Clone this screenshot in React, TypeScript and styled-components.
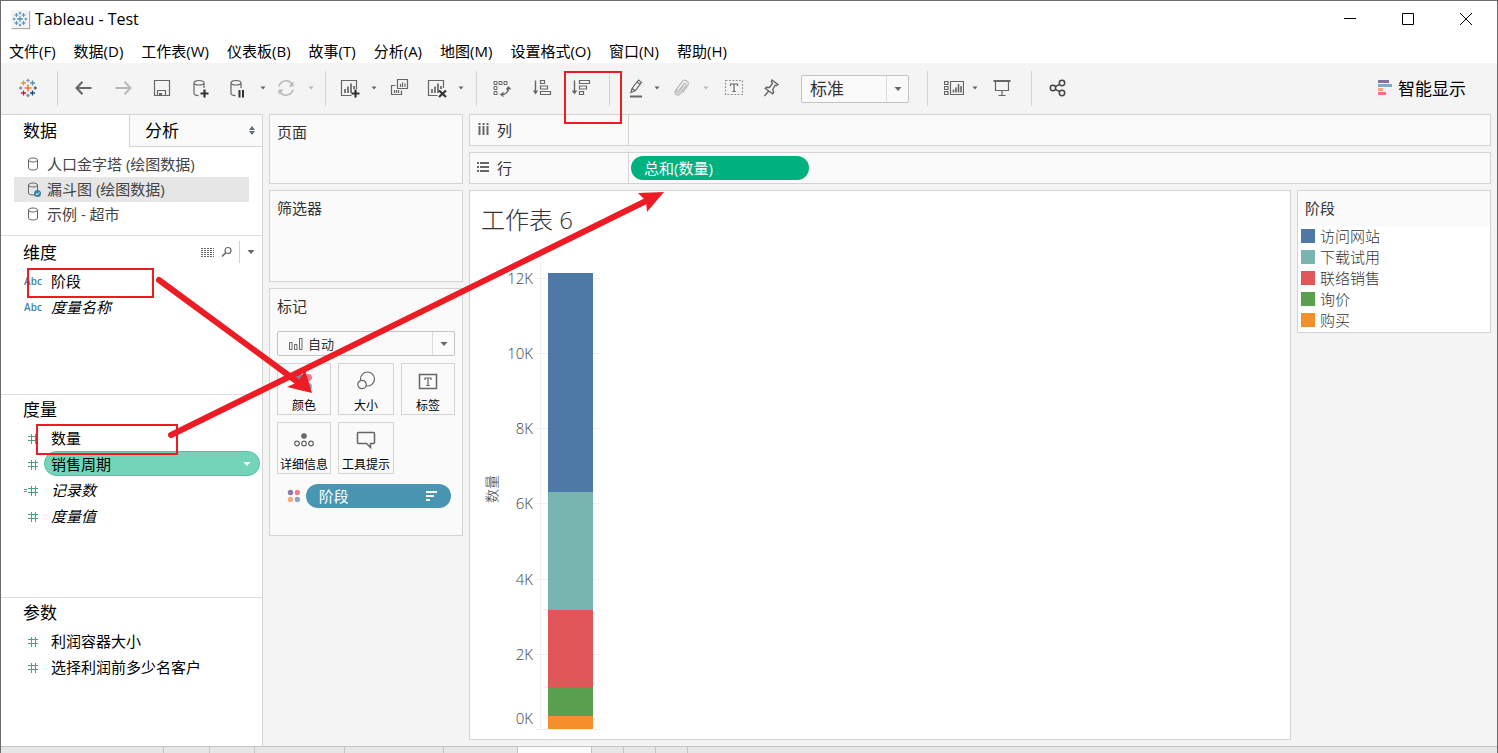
import React from "react";
import styled, { createGlobalStyle, css } from "styled-components";

const BORDER = "#d4d4d4";
const SURFACE = "#fafafa";
const CHROME = "#f4f4f4";
const RED = "#ed1c24";
const FONT = '"Open Sans", "Noto Sans CJK SC", sans-serif';

const GlobalStyle = createGlobalStyle`
  *, *::before, *::after { box-sizing: border-box; }
  body { margin: 0; background: ${CHROME}; font-family: ${FONT}; font-size: 15px; color: #000; }
  button, select { font: inherit; color: inherit; margin: 0; padding: 0; border: 0; background: none; }
  ul { list-style: none; margin: 0; padding: 0; }
  h1, h2 { margin: 0; font-weight: 400; }
  svg { display: block; }
`;

/* ---------- window frame ---------- */

const Window = styled.div`
  position: relative;
  display: flex;
  flex-direction: column;
  min-height: 100vh;
  overflow: hidden;
  border: 1px solid #6d6b6d;
  border-bottom: 0;
  background: ${CHROME};
`;

const TitleBar = styled.header`
  display: flex;
  align-items: center;
  height: 38px;
  padding: 0 2px 2px 10px;
  background: #fff;
`;

const AppBadge = styled.span`
  display: flex;
  align-items: center;
  justify-content: center;
  width: 18px;
  height: 18px;
  margin-right: 6px;
  background: #f3f3f3;
  box-shadow: 1px 1px 1px #aaa;
`;

const WindowTitle = styled.span`
  flex: 1;
  font-size: 16px;
  line-height: 36px;
`;

const WindowButton = styled.button`
  display: flex;
  align-items: center;
  justify-content: center;
  width: 58px;
  height: 36px;
`;

const MenuBar = styled.nav`
  display: flex;
  height: 24px;
  background: #fff;
`;

const MenuItem = styled.button`
  padding: 0 10px 0 8px;
  line-height: 24px;
  white-space: nowrap;
`;

/* ---------- toolbar ---------- */

const Toolbar = styled.div`
  display: flex;
  align-items: center;
  height: 51px;
  padding: 0 31px 0 8px;
`;

const ToolButton = styled.button<{ $w?: number; $dim?: boolean }>`
  display: flex;
  flex: none;
  align-items: center;
  justify-content: center;
  width: ${(p) => p.$w ?? 32}px;
  height: 35px;
  padding-bottom: 1px;
  color: ${(p) => (p.$dim ? "#b8b8b8" : "#666")};
`;

const Separator = styled.span<{ $before: number; $after: number }>`
  flex: none;
  width: 1px;
  height: 35px;
  margin: 0 ${(p) => p.$after}px 0 ${(p) => p.$before}px;
  background: ${BORDER};
`;

const SelectBox = styled.label<{ $large?: boolean }>`
  position: relative;
  display: flex;
  flex: none;
  align-items: center;
  width: ${(p) => (p.$large ? "108px" : "100%")};
  height: ${(p) => (p.$large ? 28 : 25)}px;
  margin-left: ${(p) => (p.$large ? 15 : 0)}px;
  border: 1px solid #c4c4c4;
  border-radius: 2px;
  background: ${SURFACE};
  color: #333;
`;

const Select = styled.select<{ $size: number; $indent: number }>`
  flex: 1;
  height: 100%;
  padding-left: ${(p) => p.$indent}px;
  appearance: none;
  font-size: ${(p) => p.$size}px;
  outline: none;
`;

const SelectIcon = styled.span`
  position: absolute;
  left: 11px;
  color: #666;
`;

const SelectArrow = styled.span`
  display: flex;
  align-items: center;
  justify-content: center;
  width: 22px;
  height: 100%;
  border-left: 1px solid #dcdcdc;
  color: #666;
  pointer-events: none;
`;

const ShowMe = styled.button`
  display: flex;
  align-items: center;
  gap: 6px;
  margin-left: auto;
  font-size: 17px;
  line-height: 26px;
  white-space: nowrap;
`;

/* ---------- data pane ---------- */

const Workspace = styled.main`
  display: flex;
  flex: 1;
  align-items: stretch;
`;

const DataPane = styled.aside`
  display: flex;
  flex: none;
  flex-direction: column;
  width: 262px;
  border-top: 1px solid ${BORDER};
  border-right: 1px solid ${BORDER};
  background: #fff;
`;

const PaneTabs = styled.div`
  display: flex;
  height: 32px;
`;

const PaneTab = styled.button<{ $active?: boolean }>`
  display: flex;
  align-items: center;
  justify-content: space-between;
  width: ${(p) => (p.$active ? 128 : 133)}px;
  padding: 0 7px 0 ${(p) => (p.$active ? 22 : 15)}px;
  font-size: 17px;
  line-height: 30px;
  ${(p) =>
    !p.$active &&
    css`
      border-left: 1px solid ${BORDER};
      border-bottom: 1px solid ${BORDER};
      background: ${SURFACE};
    `}
`;

const SourceList = styled.ul`
  padding: 5px 13px 8px;
  border-bottom: 1px solid #dedede;
`;

const SourceItem = styled.button<{ $selected?: boolean }>`
  display: flex;
  align-items: center;
  gap: 6px;
  width: 100%;
  height: 25px;
  padding: 0 0 2px 11px;
  color: #444;
  background: ${(p) => (p.$selected ? "#e6e6e6" : "transparent")};
  white-space: nowrap;
`;

const FieldSection = styled.section<{ $grow: number }>`
  flex: ${(p) => p.$grow} 0 0;
  & + & {
    border-top: 1px solid #dedede;
  }
`;

const SectionHead = styled.div`
  display: flex;
  align-items: flex-end;
  justify-content: space-between;
  min-height: 30px;
  padding-left: 22px;
`;

const SectionTitle = styled.h2`
  font-size: 17px;
  line-height: 30px;
`;

const SectionTools = styled.div`
  display: flex;
  align-items: center;
  height: 32px;
`;

const SectionToolButton = styled.button<{ $divided?: boolean }>`
  display: flex;
  align-items: center;
  justify-content: center;
  width: ${(p) => (p.$divided ? 23 : 19)}px;
  height: 22px;
  margin-left: ${(p) => (p.$divided ? 3 : 0)}px;
  color: #666;
  border-left: ${(p) => (p.$divided ? `1px solid ${BORDER}` : "0")};
`;

const FieldRow = styled.li`
  display: flex;
  align-items: flex-start;
  height: 26px;
  padding-right: 2px;
`;

const FieldIcon = styled.span`
  display: flex;
  flex: none;
  align-items: center;
  justify-content: center;
  width: 20px;
  height: 26px;
  margin-left: 22px;
  color: #3f83a0;
  font-size: 10px;
  font-weight: 600;
`;

const Field = styled.button<{ $italic?: boolean; $selected?: boolean }>`
  display: flex;
  flex: 1;
  align-items: center;
  justify-content: space-between;
  height: 25px;
  margin-left: 1px;
  padding: 0 8px 0 6px;
  border: 1px solid ${(p) => (p.$selected ? "#4fc3a1" : "transparent")};
  border-radius: 13px;
  background: ${(p) => (p.$selected ? "#74d4ba" : "transparent")};
  font-style: ${(p) => (p.$italic ? "italic" : "normal")};
  white-space: nowrap;
`;

/* ---------- cards and shelves ---------- */

const CardColumn = styled.div`
  display: flex;
  flex: none;
  flex-direction: column;
  gap: 6px;
  width: 194px;
  margin: 0 6px;
`;

const Card = styled.section<{ $h?: number }>`
  min-height: ${(p) => p.$h ?? 0}px;
  padding: 0 7px;
  border: 1px solid ${BORDER};
  background: ${SURFACE};
`;

const CardTitle = styled.h2`
  color: #333;
  font-size: 15px;
  line-height: 34px;
`;

const MarkGrid = styled.div`
  display: grid;
  grid-template-columns: 54fr 56fr 54fr;
  grid-auto-rows: 52px;
  gap: 7px;
  margin-top: 7px;
`;

const MarkButton = styled.button`
  display: flex;
  flex-direction: column;
  align-items: center;
  justify-content: flex-end;
  border: 1px solid ${BORDER};
  background: ${SURFACE};
  font-size: 12px;
  line-height: 16px;
  white-space: nowrap;
  svg {
    margin-bottom: 7px;
    color: #666;
  }
`;

const MarksBody = styled.div`
  padding-top: 8px;
`;

const MarkPillRow = styled.div`
  display: flex;
  align-items: center;
  gap: 5px;
  margin: 10px 4px 0 10px;
`;

const Pill = styled.button<{ $color: string; $w?: number }>`
  display: flex;
  align-items: center;
  justify-content: space-between;
  width: ${(p) => (p.$w ? `${p.$w}px` : "100%")};
  height: 24px;
  padding: 0 13px 1px;
  border-radius: 12px;
  background: ${(p) => p.$color};
  color: #fff;
  line-height: 22px;
  white-space: nowrap;
`;

const Content = styled.div`
  display: flex;
  flex: 1;
  flex-direction: column;
  gap: 6px;
  min-width: 0;
  padding: 0 6px 6px 0;
`;

const Shelf = styled.div`
  display: flex;
  height: 32px;
  border: 1px solid ${BORDER};
  background: ${SURFACE};
`;

const ShelfLabel = styled.div`
  display: flex;
  flex: none;
  align-items: center;
  gap: 7px;
  width: 159px;
  padding: 0 0 2px 7px;
  border-right: 1px solid ${BORDER};
  color: #333;
`;

const ShelfDrop = styled.div`
  display: flex;
  flex: 1;
  align-items: center;
  padding-left: 2px;
`;

const ViewRow = styled.div`
  display: flex;
  flex: 1;
  align-items: flex-start;
  gap: 6px;
`;

const View = styled.section`
  flex: 1;
  align-self: stretch;
  min-width: 0;
  border: 1px solid ${BORDER};
  background: #fff;
`;

const SheetTitle = styled.h1`
  padding: 9px 11px 0;
  color: #333;
  font-size: 24px;
  font-weight: 300;
  line-height: 40px;
`;

const Legend = styled.section`
  flex: none;
  width: 194px;
  padding-bottom: 1px;
  border: 1px solid ${BORDER};
  background: #fff;
`;

const LegendTitle = styled.h2`
  height: 35px;
  padding-left: 7px;
  background: ${SURFACE};
  color: #333;
  font-size: 15px;
  line-height: 34px;
`;

const LegendItem = styled.li`
  display: flex;
  align-items: center;
  gap: 5px;
  height: 21px;
  padding: 0 0 2px 3px;
  color: #333;
  font-weight: 300;
  line-height: 18px;
`;

const Swatch = styled.span<{ $color: string }>`
  width: 14px;
  height: 14px;
  background: ${(p) => p.$color};
`;

const SheetTabs = styled.nav`
  display: flex;
  flex: none;
  height: 7px;
  overflow: hidden;
  border-top: 1px solid #c4c4c4;
  background: #e6e6e6;
`;

const SheetTab = styled.button<{ $w: number; $active?: boolean }>`
  flex: none;
  width: ${(p) => p.$w}px;
  border-right: 1px solid #c4c4c4;
  background: ${(p) => (p.$active ? SURFACE : "transparent")};
`;

const Annotations = styled.svg`
  position: absolute;
  top: -1px;
  left: -1px;
  pointer-events: none;
`;

/* ---------- icons ---------- */

type IconProps = { children: React.ReactNode; w?: number; h?: number };

const Icon = ({ children, w = 20, h = 20 }: IconProps) => (
  <svg width={w} height={h} viewBox={`0 0 ${w} ${h}`} fill="none" stroke="currentColor" strokeWidth="1.2" aria-hidden="true">
    {children}
  </svg>
);

const Caret = ({ color = "currentColor", large = false }: { color?: string; large?: boolean }) => (
  <svg width="8" height="6" viewBox="0 0 8 6" aria-hidden="true">
    <path d={large ? "M0.5 1h7L4 5z" : "M1.5 1.5h5L4 4.5z"} fill={color} />
  </svg>
);

const plus = (x: number, y: number, r: number) => `M${x - r} ${y}h${r * 2}M${x} ${y - r}v${r * 2}`;

const TableauLogo = ({ mono = false, size = 20 }: { mono?: boolean; size?: number }) => {
  const c = (color: string) => (mono ? "#4a90bf" : color);
  return (
    <svg width={size} height={size} viewBox="0 0 20 20" fill="none" strokeWidth="1.3" aria-hidden="true">
      <path d={plus(10, 10, 3.5)} stroke={c("#eb7b2f")} strokeWidth="1.6" />
      <path d={plus(5.5, 5, 2.5)} stroke={c("#eb912c")} />
      <path d={plus(14.5, 5, 2.5)} stroke={c("#5f8f9c")} />
      <path d={plus(5.5, 15, 2.5)} stroke={c("#c72037")} />
      <path d={plus(14.5, 15, 2.5)} stroke={c("#1f457e")} />
      <path d={plus(10, 2.5, 1.7)} stroke={c("#7f9fb4")} />
      <path d={plus(10, 17.5, 1.7)} stroke={c("#8185a8")} />
      <path d={plus(2.7, 10, 1.7)} stroke={c("#7199a6")} />
      <path d={plus(17.3, 10, 1.7)} stroke={c("#5b6591")} />
    </svg>
  );
};

const cylinder = "M3 4.8c0-1.3 2.2-2.3 5-2.3s5 1 5 2.3S10.800 7 8 7 3 6.100 3 4.800v10.500c0 1.200 1.800 2.200 4.500 2.300M13 4.800V10";

const BackIcon = () => (
  <Icon><path d="M17.500 10h-15M8.500 3.800L2.500 10l6 6.200" strokeWidth="2" /></Icon>
);
const ForwardIcon = () => (
  <Icon><path d="M2.500 10h15M11.500 3.800l6 6.200-6 6.200" strokeWidth="2" /></Icon>
);
const SaveIcon = () => (
  <Icon><path d="M2.500 2.500h15v15h-15zM5.500 17.500v-5h8v5" /><path d="M7 15h3v2.500H7z" fill="currentColor" stroke="none" /></Icon>
);
const AddSourceIcon = () => (
  <Icon><path d={cylinder} /><path d="M13.500 11.500v8M9.500 15.500h8" stroke="#333" strokeWidth="2.200" /></Icon>
);
const PauseIcon = () => (
  <Icon><path d={cylinder} /><path d="M11.500 12v7.500M15 12v7.500" stroke="#333" strokeWidth="2" /></Icon>
);
const RefreshIcon = () => (
  <Icon>
    <path d="M3 8.500a7.200 7.200 0 0 1 13-2.500M17 11.500a7.200 7.200 0 0 1-13 2.500" strokeWidth="1.500" />
    <path d="M17.500 3.500v5h-5zM2.500 16.500v-5h5z" fill="currentColor" stroke="none" />
  </Icon>
);
const bars = "M5 11v4M8 8.500V15M11 5.500V15M14 8v3";
const NewSheetIcon = () => (
  <Icon>
    <path d="M11.500 17.500h-10v-15h15V11" />
    <path d={bars} strokeWidth="1.700" />
    <path d="M15.500 11.500v8M11.500 15.500h8" stroke="#333" strokeWidth="2.200" />
  </Icon>
);
const DuplicateIcon = () => (
  <Icon>
    <path d="M8.500 1.500h10v9h-10z" />
    <path d="M6.500 7.500h-4v9h10v-4" />
    <path d="M11.500 6v3M13.500 4.500V9M16 5.500V9M5.500 12v3M7.500 12v3M9.500 12v3" />
  </Icon>
);
const ClearSheetIcon = () => (
  <Icon>
    <path d="M10.500 17.500h-9v-15h15V10" />
    <path d={bars} strokeWidth="1.700" />
    <path d="M12 12.500l7 6.500M19 12.500L12 19" stroke="#333" strokeWidth="2.200" />
  </Icon>
);
const SwapIcon = () => (
  <Icon>
    <path d="M2 3.500h3v3H2zM7 3.500h3v3H7zM12 3.500h3v3h-3zM2 8.500h3v3H2zM2 13.500h3v3H2z" strokeWidth="1" />
    <path d="M16.500 9.500c0 4-2.500 7-7 7M14.500 11.500l2-2.500 2 2.500M11.500 14.500l-2.500 2 2.500 2" strokeWidth="1.400" />
  </Icon>
);
const SortAscIcon = () => (
  <Icon>
    <path d="M3.500 2.500v12" strokeWidth="1.400" /><path d="M.8 12.500h5.400L3.500 16.500z" fill="currentColor" stroke="none" />
    <path d="M8.500 2.500h4v3h-4zM8.500 8h7v3h-7zM8.500 13.500h10v3h-10z" />
  </Icon>
);
const SortDescIcon = () => (
  <Icon>
    <path d="M3.500 2.500v12" strokeWidth="1.400" /><path d="M.8 12.500h5.400L3.500 16.500z" fill="currentColor" stroke="none" />
    <path d="M8.500 2.500h10v3h-10zM8.500 8h7v3h-7zM8.500 13.500h4v3h-4z" />
  </Icon>
);
const HighlightIcon = () => (
  <Icon>
    <path d="M5 14.500l1-4 6.500-8.500 3 2.300-6.300 8.500-4.200 1.700zM6 10.500l3.200 2.300M11 4l3 2.300" />
    <path d="M4 18.500h12" strokeWidth="2" />
  </Icon>
);
const ClipIcon = () => (
  <Icon><path d="M8 12.500l4.500-6.500c1.300-1.600 3.500 0 2.300 1.700l-6 8.300c-2.200 2.600-6.300-.2-4.400-3.200l6.500-9c3-3.600 8.200 0 5.700 3.800l-5.100 7.200M7 11.500l-1.200 1.800c-.6 1.200.8 2.200 1.700 1.200l5-7" /></Icon>
);
const TextBoxIcon = () => (
  <Icon>
    <path d="M1.500 2.500h17v14h-17z" strokeDasharray="2 1.400" stroke="#999" />
    <path d="M6.500 8V6h7v2M10 6v8M8.300 13.500h3.400" />
  </Icon>
);
const PinIcon = () => (
  <Icon><path d="M11 2l6 4.500-1.200 1-1.600-.3-2.500 4.300.9 3-1 1.200-7.300-5.200 1.200-1.200 3 .2 3-4-1.100-2zM7.500 13.300L3.500 18" strokeWidth="1.400" /></Icon>
);
const CardsIcon = () => (
  <Icon>
    <path d="M0.500 3.500h3.500v3H0.500zM0.500 8.500h3.500v3H0.500zM0.500 13.500h3.500v3H0.500zM6.500 3.500h13v13h-13z" />
    <path d="M9.500 11.500v3M12 9.500v5M14.500 6v8.500M17 8v6.500" strokeWidth="1.600" />
  </Icon>
);
const PresentIcon = () => (
  <Icon>
    <path d="M1.500 3h17" strokeWidth="2" /><path d="M3.500 3v9.500h13V3M10 12.500V17M6.500 17.500h7" />
  </Icon>
);
const ShareIcon = () => (
  <Icon>
    <g stroke="#444" strokeWidth="1.500">
      <circle cx="5" cy="10" r="2.700" /><circle cx="14" cy="5" r="2.700" /><circle cx="14" cy="15" r="2.700" />
      <path d="M7.400 8.700l4.200-2.400M7.400 11.300l4.200 2.400" />
    </g>
  </Icon>
);
const ShowMeIcon = () => (
  <svg width="14" height="18" viewBox="0 0 14 18" aria-hidden="true">
    <path fill="#86729b" d="M0 0h11v3H0z" /><path fill="#82a8ce" d="M0 4h14v3H0z" />
    <path fill="#f4a577" d="M0 8h5v3H0z" /><path fill="#fa6e80" d="M0 12h8v3H0z" />
  </svg>
);
const SourceIcon = ({ checked = false }: { checked?: boolean }) => (
  <Icon w={16} h={18}>
    <path d="M3.500 5c0-1.200 2-2 4.500-2s4.500.8 4.500 2v8c0 1.200-2 2-4.500 2s-4.500-.8-4.500-2zM3.500 5c0 1.200 2 2 4.500 2s4.500-.8 4.500-2" stroke="#666" strokeWidth="1" />
    {checked && (
      <>
        <circle cx="12.500" cy="13.500" r="3.500" fill="#3c83a3" stroke="none" />
        <path d="M10.800 13.500l1.400 1.300 2-2.300" stroke="#fff" strokeWidth="1" />
      </>
    )}
  </Icon>
);
const HashIcon = ({ calculated = false }: { calculated?: boolean }) => (
  <svg width="20" height="12" viewBox="0 0 20 12" fill="none" stroke="#45a381" strokeWidth="1" shapeRendering="crispEdges" aria-hidden="true">
    <path d="M5 4.500h10M5 8.500h10M8.500 1.500v10M12.500 1.500v10" />
    {calculated && <path d="M1 5.500h3M1 7.500h3" />}
  </svg>
);
const ListIcon = () => (
  <Icon w={13} h={11}><path d="M0 1.500h13M0 3.500h13M0 5.500h13M0 7.500h13M0 9.500h13" strokeWidth="1" strokeDasharray="2 1" /></Icon>
);
const SearchIcon = () => (
  <Icon w={12} h={12}><circle cx="7" cy="4.500" r="3" /><path d="M4.700 6.700L1 10.500" strokeWidth="1.600" /></Icon>
);
const DotsIcon = ({ size = 16 }: { size?: number }) => (
  <svg width={size} height={size} viewBox="0 0 16 16" aria-hidden="true">
    <circle cx="4" cy="4" r="3.100" fill="#8c7aa6" /><circle cx="12" cy="4" r="3.100" fill="#f77a8c" />
    <circle cx="4" cy="12" r="3.100" fill="#f4ab80" /><circle cx="12" cy="12" r="3.100" fill="#86a9d2" />
  </svg>
);
const SizeIcon = () => (
  <Icon><circle cx="11.500" cy="8" r="7" /><circle cx="6" cy="13.500" r="4.200" fill={SURFACE} /></Icon>
);
const LabelIcon = () => (
  <Icon><path d="M1.500 3.500h17v14h-17z" strokeWidth="1.500" /><path d="M7 9V7h6v2M10 7v7.500M8.300 14.500h3.400" /></Icon>
);
const DetailIcon = () => (
  <Icon>
    <circle cx="10" cy="6" r="2.800" fill="currentColor" stroke="none" />
    <circle cx="3" cy="13.500" r="2.300" /><circle cx="10" cy="13.500" r="2.300" /><circle cx="17" cy="13.500" r="2.300" />
  </Icon>
);
const TooltipIcon = () => (
  <Icon><path d="M2.500 2.500h15a1 1 0 0 1 1 1v9a1 1 0 0 1-1 1h-3v4l-4-4h-8a1 1 0 0 1-1-1v-9a1 1 0 0 1 1-1z" strokeWidth="1.500" /></Icon>
);

/* ---------- data ---------- */

const MENUS = ["文件(F)", "数据(D)", "工作表(W)", "仪表板(B)", "故事(T)", "分析(A)", "地图(M)", "设置格式(O)", "窗口(N)", "帮助(H)"];

const MARKS: { name: string; icon: React.ReactNode }[] = [
  { name: "颜色", icon: <DotsIcon size={18} /> },
  { name: "大小", icon: <SizeIcon /> },
  { name: "标签", icon: <LabelIcon /> },
  { name: "详细信息", icon: <DetailIcon /> },
  { name: "工具提示", icon: <TooltipIcon /> },
];

const STAGES = [
  { name: "访问网站", color: "#4e79a7", top: 33, height: 219 },
  { name: "下载试用", color: "#79b5b0", top: 252, height: 118 },
  { name: "联络销售", color: "#e15759", top: 370, height: 77 },
  { name: "询价", color: "#59a14f", top: 447, height: 29 },
  { name: "购买", color: "#f58f2c", top: 476, height: 13 },
];

const TICKS = [
  { label: "12K", y: 38 },
  { label: "10K", y: 113 },
  { label: "8K", y: 188 },
  { label: "6K", y: 263 },
  { label: "4K", y: 339 },
  { label: "2K", y: 414 },
  { label: "0K", y: 489 },
];

const SHEET_TABS = [163, 46, 45, 90, 99, 74, 74, 32, 32, 32];
const ACTIVE_TAB = 6;

/* ---------- parts ---------- */

const StageChart = () => (
  <svg width="140" height="496" viewBox="0 0 140 496" role="img" aria-label="数量">
    <g stroke="#f0f0f0" shapeRendering="crispEdges">
      <path d="M70.500 16v473" />
      {TICKS.map((t) => <path key={t.label} d={`M65 ${t.y + 0.5}h66`} />)}
    </g>
    <g fill="#444" fontSize="15" fontWeight="300" textAnchor="end">
      {TICKS.map((t) => (
        <text key={t.label} x="63" y={Math.min(t.y, 478) + 6}>{t.label}</text>
      ))}
    </g>
    <text fill="#444" fontSize="14" fontWeight="300" textAnchor="middle" transform="translate(27 249) rotate(-90)">数量</text>
    {STAGES.map((s) => (
      <rect key={s.name} x="78" y={s.top} width="45" height={s.height} fill={s.color} shapeRendering="crispEdges" />
    ))}
  </svg>
);

type FieldItem = { name: string; icon: React.ReactNode; italic?: boolean; selected?: boolean };

const FieldList = ({ items }: { items: FieldItem[] }) => (
  <ul>
    {items.map((f) => (
      <FieldRow key={f.name}>
        <FieldIcon>{f.icon}</FieldIcon>
        <Field $italic={f.italic} $selected={f.selected}>
          {f.name}
          {f.selected && <Caret color="#fff" large />}
        </Field>
      </FieldRow>
    ))}
  </ul>
);

const CaretButton = ({ label, w = 10, dim }: { label: string; w?: number; dim?: boolean }) => (
  <ToolButton $w={w} $dim={dim} aria-label={label}><Caret /></ToolButton>
);

export default function App() {
  return (
    <>
      <GlobalStyle />
      <Window>
        <TitleBar>
          <AppBadge><TableauLogo mono size={16} /></AppBadge>
          <WindowTitle>Tableau - Test</WindowTitle>
          <WindowButton aria-label="最小化">
            <svg width="12" height="12"><path d="M0 5.500h12" stroke="#000" /></svg>
          </WindowButton>
          <WindowButton aria-label="最大化">
            <svg width="12" height="12"><path d="M.5.500h11v11H.5z" fill="none" stroke="#000" /></svg>
          </WindowButton>
          <WindowButton aria-label="关闭">
            <svg width="12" height="12"><path d="M0 0l12 12M12 0L0 12" stroke="#000" /></svg>
          </WindowButton>
        </TitleBar>

        <MenuBar>
          {MENUS.map((m) => <MenuItem key={m}>{m}</MenuItem>)}
        </MenuBar>

        <Toolbar>
          <ToolButton $w={38} aria-label="开始页面"><TableauLogo /></ToolButton>
          <Separator $before={10} $after={6} />
          <ToolButton $w={39} aria-label="撤销"><BackIcon /></ToolButton>
          <ToolButton $w={39} $dim aria-label="重做"><ForwardIcon /></ToolButton>
          <ToolButton $w={39} aria-label="保存"><SaveIcon /></ToolButton>
          <ToolButton $w={39} aria-label="新建数据源"><AddSourceIcon /></ToolButton>
          <ToolButton $w={36} aria-label="暂停自动更新"><PauseIcon /></ToolButton>
          <CaretButton w={14} label="更新选项" />
          <ToolButton $dim aria-label="运行更新"><RefreshIcon /></ToolButton>
          <CaretButton w={18} dim label="运行选项" />
          <Separator $before={5} $after={6} />
          <ToolButton $w={36} aria-label="新建工作表"><NewSheetIcon /></ToolButton>
          <CaretButton w={12} label="新建选项" />
          <ToolButton $w={38} aria-label="复制工作表"><DuplicateIcon /></ToolButton>
          <ToolButton $w={38} aria-label="清除工作表"><ClearSheetIcon /></ToolButton>
          <CaretButton label="清除选项" />
          <Separator $before={10} $after={7} />
          <ToolButton $w={36} aria-label="交换行和列"><SwapIcon /></ToolButton>
          <ToolButton $w={44} aria-label="升序排序"><SortAscIcon /></ToolButton>
          <ToolButton $w={34} aria-label="降序排序"><SortDescIcon /></ToolButton>
          <Separator $before={11} $after={10} />
          <ToolButton aria-label="突出显示"><HighlightIcon /></ToolButton>
          <CaretButton label="突出显示选项" />
          <ToolButton $w={38} $dim aria-label="分组成员"><ClipIcon /></ToolButton>
          <CaretButton w={12} dim label="分组选项" />
          <ToolButton $w={44} aria-label="显示标记标签"><TextBoxIcon /></ToolButton>
          <ToolButton $w={30} aria-label="固定轴"><PinIcon /></ToolButton>
          <SelectBox $large>
            <Select $size={17} $indent={8} aria-label="适合" defaultValue="标准">
              <option>标准</option>
            </Select>
            <SelectArrow><Caret large /></SelectArrow>
          </SelectBox>
          <Separator $before={18} $after={10} />
          <ToolButton aria-label="显示卡片"><CardsIcon /></ToolButton>
          <CaretButton label="卡片选项" />
          <ToolButton $w={44} aria-label="演示模式"><PresentIcon /></ToolButton>
          <Separator $before={7} $after={10} />
          <ToolButton aria-label="共享"><ShareIcon /></ToolButton>
          <ShowMe><ShowMeIcon />智能显示</ShowMe>
        </Toolbar>

        <Workspace>
          <DataPane>
            <PaneTabs>
              <PaneTab $active>数据</PaneTab>
              <PaneTab>
                分析
                <svg width="6" height="10" aria-hidden="true"><path d="M3 0l3 4H0zM3 9l3-4H0z" fill="#5f6b75" /></svg>
              </PaneTab>
            </PaneTabs>
            <SourceList>
              <li><SourceItem><SourceIcon />人口金字塔 (绘图数据)</SourceItem></li>
              <li><SourceItem $selected><SourceIcon checked />漏斗图 (绘图数据)</SourceItem></li>
              <li><SourceItem><SourceIcon />示例 - 超市</SourceItem></li>
            </SourceList>
            <FieldSection $grow={158}>
              <SectionHead>
                <SectionTitle>维度</SectionTitle>
                <SectionTools>
                  <SectionToolButton aria-label="查看数据"><ListIcon /></SectionToolButton>
                  <SectionToolButton aria-label="查找字段"><SearchIcon /></SectionToolButton>
                  <SectionToolButton $divided aria-label="维度菜单"><Caret large /></SectionToolButton>
                </SectionTools>
              </SectionHead>
              <FieldList items={[{ name: "阶段", icon: "Abc" }, { name: "度量名称", icon: "Abc", italic: true }]} />
            </FieldSection>
            <FieldSection $grow={202}>
              <SectionHead><SectionTitle>度量</SectionTitle></SectionHead>
              <FieldList
                items={[
                  { name: "数量", icon: <HashIcon /> },
                  { name: "销售周期", icon: <HashIcon />, selected: true },
                  { name: "记录数", icon: <HashIcon calculated />, italic: true },
                  { name: "度量值", icon: <HashIcon />, italic: true },
                ]}
              />
            </FieldSection>
            <FieldSection $grow={148}>
              <SectionHead><SectionTitle>参数</SectionTitle></SectionHead>
              <FieldList items={[{ name: "利润容器大小", icon: <HashIcon /> }, { name: "选择利润前多少名客户", icon: <HashIcon /> }]} />
            </FieldSection>
          </DataPane>

          <CardColumn>
            <Card $h={70}><CardTitle>页面</CardTitle></Card>
            <Card $h={92}><CardTitle>筛选器</CardTitle></Card>
            <Card $h={248}>
              <CardTitle>标记</CardTitle>
              <MarksBody>
                <SelectBox>
                  <SelectIcon>
                    <Icon w={14} h={14}><path d="M0.500 5.500h2.500v7H0.500zM5.500 7.500h2.500v5H5.500zM10.500 1.500h2.500v11h-2.500z" strokeWidth="1" /></Icon>
                  </SelectIcon>
                  <Select $size={13} $indent={30} aria-label="标记类型" defaultValue="自动">
                    <option>自动</option>
                  </Select>
                  <SelectArrow><Caret large /></SelectArrow>
                </SelectBox>
                <MarkGrid>
                  {MARKS.map((m) => <MarkButton key={m.name}>{m.icon}{m.name}</MarkButton>)}
                </MarkGrid>
                <MarkPillRow>
                  <DotsIcon />
                  <Pill $color="#4996b2">
                    阶段
                    <svg width="12" height="10" aria-hidden="true"><path d="M0 1h11M0 5h8M0 9h4" stroke="#fff" strokeWidth="2" /></svg>
                  </Pill>
                </MarkPillRow>
              </MarksBody>
            </Card>
          </CardColumn>

          <Content>
            <Shelf>
              <ShelfLabel>
                <svg width="13" height="12" aria-hidden="true"><path d="M2.500 0v2M6.500 0v2M10.500 0v2M2.500 3v9M6.500 3v9M10.500 3v9" stroke="#666" strokeWidth="2" /></svg>
                列
              </ShelfLabel>
              <ShelfDrop />
            </Shelf>
            <Shelf>
              <ShelfLabel>
                <svg width="13" height="12" aria-hidden="true"><path d="M0 2h2M0 6h2M0 10h2M3 2h9M3 6h9M3 10h9" stroke="#666" strokeWidth="2" /></svg>
                行
              </ShelfLabel>
              <ShelfDrop><Pill $color="#00b180" $w={178}>总和(数量)</Pill></ShelfDrop>
            </Shelf>
            <ViewRow>
              <View>
                <SheetTitle>工作表 6</SheetTitle>
                <StageChart />
              </View>
              <Legend>
                <LegendTitle>阶段</LegendTitle>
                <ul>
                  {STAGES.map((s) => <LegendItem key={s.name}><Swatch $color={s.color} />{s.name}</LegendItem>)}
                </ul>
              </Legend>
            </ViewRow>
          </Content>
        </Workspace>

        <SheetTabs>
          {SHEET_TABS.map((w, i) => <SheetTab key={i} $w={w} $active={i === ACTIVE_TAB} aria-label={`工作表标签 ${i + 1}`} />)}
        </SheetTabs>

        <Annotations width="700" height="480" viewBox="0 0 700 480" fill="none" stroke={RED} strokeWidth="2" aria-hidden="true">
          <path d="M565 72h56v51h-56zM28 269h125v28H28zM37 425h140v29H37z" />
          <path d="M159 280l140 103M171 435L648 200" strokeWidth="6" strokeLinecap="round" />
          <path d="M312 393l-25-6 11-5 7-12zM664 192l-26 1 8 8 1 11z" fill={RED} stroke="none" />
        </Annotations>
      </Window>
    </>
  );
}
